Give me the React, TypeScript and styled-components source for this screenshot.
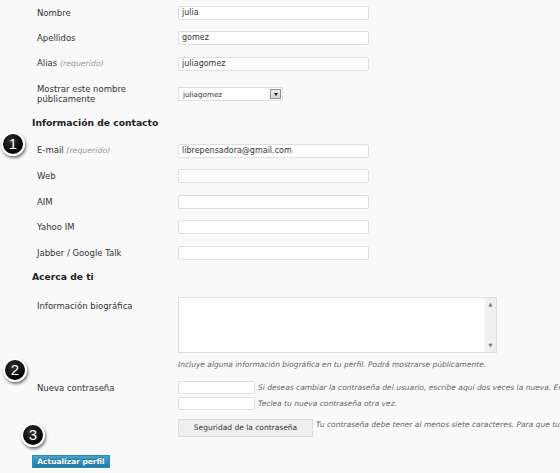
import React from 'react';
import styled, { createGlobalStyle } from 'styled-components';

const GlobalStyle = createGlobalStyle`
  html, body {
    margin: 0;
    padding: 0;
    background: #f9f9f9;
    overflow: hidden;
  }
  body {
    font-family: "DejaVu Sans", Verdana, sans-serif;
    color: #333;
  }
`;

const Page = styled.div`
  position: relative;
  width: 560px;
  height: 473px;
  padding-left: 32px;
  box-sizing: border-box;
  overflow: hidden;
`;

const Row = styled.div<{ h: number; top?: boolean }>`
  display: grid;
  grid-template-columns: 146px auto;
  align-items: ${p => (p.top ? 'start' : 'center')};
  height: ${p => p.h}px;
`;

const Label = styled.div<{ pt?: number }>`
  padding-left: 5px;
  padding-top: ${p => p.pt || 0}px;
  font-size: 8.5px;
  line-height: 10px;
  color: #333;
`;

const Req = styled.span`
  font-style: italic;
  color: #999;
  font-size: 7.8px;
`;

const Heading = styled.h3<{ pt: number; pb: number }>`
  margin: 0;
  padding: ${p => p.pt}px 0 ${p => p.pb}px;
  font-size: 9.2px;
  line-height: 12px;
  font-weight: bold;
  color: #222;
`;

const TextInput = styled.div<{ w?: number; h?: number }>`
  width: ${p => p.w || 191}px;
  height: ${p => p.h || 14}px;
  box-sizing: border-box;
  background: #fff;
  border: 1px solid #dfdfdf;
  border-radius: 2px;
  padding: 0 3px;
  font-size: 8px;
  line-height: 12px;
  color: #333;
  white-space: nowrap;
  overflow: hidden;
`;

const Select = styled.div`
  width: 105px;
  height: 14px;
  box-sizing: border-box;
  background: #fff;
  border: 1px solid #dfdfdf;
  display: flex;
  align-items: center;
  justify-content: space-between;
  padding: 0 1px 0 4px;
  font-size: 7.2px;
  color: #333;
`;

const SelectArrow = styled.div`
  width: 11px;
  height: 10px;
  box-sizing: border-box;
  border: 1px solid #8f8f8f;
  background: linear-gradient(#eee, #d4d4d4);
  display: flex;
  align-items: center;
  justify-content: center;
  &::after {
    content: '';
    border-left: 2.5px solid transparent;
    border-right: 2.5px solid transparent;
    border-top: 3px solid #111;
  }
`;

const TextArea = styled.div`
  width: 319px;
  height: 56px;
  box-sizing: border-box;
  background: #fff;
  border: 1px solid #dfdfdf;
  display: flex;
  justify-content: flex-end;
`;

const Scrollbar = styled.div`
  width: 11px;
  background: #f0f0f0;
  display: flex;
  flex-direction: column;
  justify-content: space-between;
  align-items: center;
  padding: 4px 0;
  box-sizing: border-box;
  font-size: 5px;
  line-height: 5px;
  color: #777;
`;

const Hint = styled.div<{ ml?: number; mt?: number }>`
  margin-left: ${p => p.ml || 0}px;
  margin-top: ${p => p.mt || 0}px;
  font-size: 7.5px;
  line-height: 11px;
  font-style: italic;
  color: #666;
  white-space: nowrap;
`;

const FieldStack = styled.div`
  display: flex;
  flex-direction: column;
`;

const FieldLine = styled.div<{ mt?: number; top?: boolean }>`
  display: flex;
  align-items: ${p => (p.top ? 'flex-start' : 'center')};
  gap: 3px;
  margin-top: ${p => p.mt || 0}px;
`;

const StrengthBox = styled.div`
  width: 135px;
  height: 18px;
  flex-shrink: 0;
  box-sizing: border-box;
  background: #eee;
  border: 1px solid #ddd;
  display: flex;
  align-items: center;
  justify-content: center;
  font-size: 7.5px;
  color: #333;
`;

const SubmitButton = styled.button`
  margin-top: 18px;
  width: 78px;
  height: 13px;
  padding: 0;
  border: 1px solid #298cba;
  background: linear-gradient(#45a3d1, #2179a3);
  color: #fff;
  font-family: inherit;
  font-size: 7.5px;
  font-weight: bold;
  line-height: 11px;
  text-shadow: 0 -1px 0 rgba(0, 0, 0, 0.4);
  display: block;
`;

const Badge = styled.div<{ x: number; y: number }>`
  position: absolute;
  left: ${p => p.x - 12}px;
  top: ${p => p.y - 12}px;
  width: 24px;
  height: 24px;
  box-sizing: border-box;
  border-radius: 50%;
  background: radial-gradient(circle at 40% 35%, #333, #000 70%);
  border: 2px solid #fff;
  box-shadow: 1px 2px 3px rgba(0, 0, 0, 0.55);
  color: #fff;
  font-family: "Liberation Sans", Arial, sans-serif;
  font-size: 15px;
  line-height: 20px;
  text-align: center;
`;

export default function App() {
  return (
    <>
      <GlobalStyle />
      <Page>
        <Row h={25.5}>
          <Label>Nombre</Label>
          <TextInput>julia</TextInput>
        </Row>
        <Row h={25.5}>
          <Label>Apellidos</Label>
          <TextInput>gomez</TextInput>
        </Row>
        <Row h={25.5}>
          <Label>
            Alias <Req>(requerido)</Req>
          </Label>
          <TextInput>juliagomez</TextInput>
        </Row>
        <Row h={35}>
          <Label>
            Mostrar este nombre
            <br />
            públicamente
          </Label>
          <Select>
            juliagomez
            <SelectArrow />
          </Select>
        </Row>

        <Heading pt={5.5} pb={8.75}>Información de contacto</Heading>
        <Row h={25.5}>
          <Label>
            E-mail <Req>(requerido)</Req>
          </Label>
          <TextInput>librepensadora@gmail.com</TextInput>
        </Row>
        <Row h={25.5}>
          <Label>Web</Label>
          <TextInput />
        </Row>
        <Row h={25.5}>
          <Label>AIM</Label>
          <TextInput />
        </Row>
        <Row h={25.5}>
          <Label>Yahoo IM</Label>
          <TextInput />
        </Row>
        <Row h={25.5}>
          <Label>Jabber / Google Talk</Label>
          <TextInput />
        </Row>

        <Heading pt={5.75} pb={14.25}>Acerca de ti</Heading>
        <Row h={56} top>
          <Label pt={3.5}>Información biográfica</Label>
          <TextArea>
            <Scrollbar>
              <span>▲</span>
              <span>▼</span>
            </Scrollbar>
          </TextArea>
        </Row>
        <Hint ml={146} mt={6}>
          Incluye alguna información biográfica en tu perfil. Podrá mostrarse públicamente.
        </Hint>

        <Row h={55.5} top style={{ marginTop: 11 }}>
          <Label pt={1.5}>Nueva contraseña</Label>
          <FieldStack>
            <FieldLine>
              <TextInput w={77} h={13} />
              <Hint>
                Si deseas cambiar la contraseña del usuario, escribe aquí dos veces la nueva. En caso contrario, deja las casillas en blanco.
              </Hint>
            </FieldLine>
            <FieldLine mt={2.5}>
              <TextInput w={77} h={13} />
              <Hint>Teclea tu nueva contraseña otra vez.</Hint>
            </FieldLine>
            <FieldLine mt={9} top>
              <StrengthBox>Seguridad de la contraseña</StrengthBox>
              <Hint>
                Tu contraseña debe tener al menos siete caracteres. Para que tu contraseña sea más segura usa mayúsculas y minúsculas.
              </Hint>
            </FieldLine>
          </FieldStack>
        </Row>

        <SubmitButton>Actualizar perfil</SubmitButton>

        <Badge x={13} y={144}>1</Badge>
        <Badge x={15} y={370}>2</Badge>
        <Badge x={33} y={435}>3</Badge>
      </Page>
    </>
  );
}
